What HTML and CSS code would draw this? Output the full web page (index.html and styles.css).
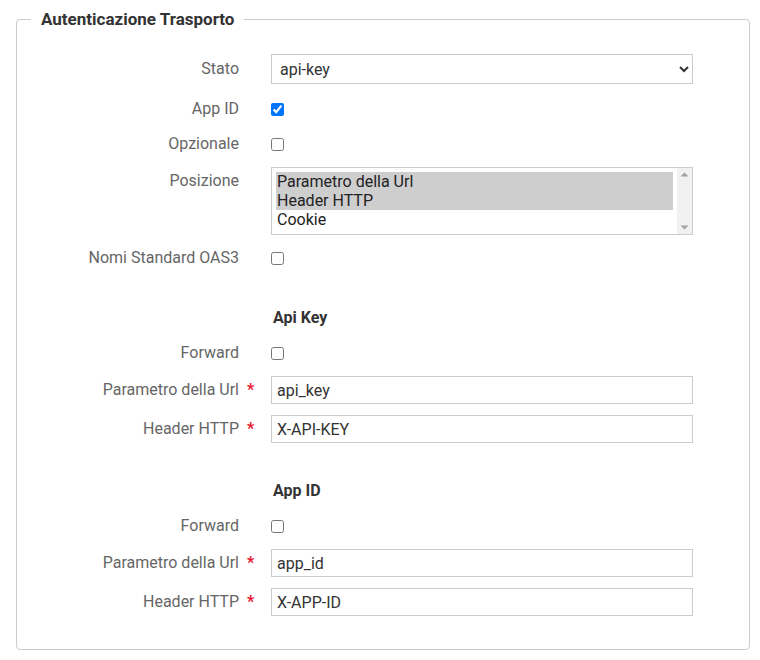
FILE: index.html
```html
<!DOCTYPE html>
<html lang="it">
<head>
<meta charset="utf-8">
<title>Autenticazione Trasporto</title>
<link rel="stylesheet" href="styles.css">
</head>
<body>
<div class="page">
  <fieldset class="box">
    <legend class="box-title">Autenticazione Trasporto</legend>

    <div class="row row-first">
      <label class="lbl">Stato</label>
      <span class="req"></span>
      <select class="ctl-select">
        <option>api-key</option>
      </select>
    </div>

    <div class="row">
      <label class="lbl">App ID</label>
      <span class="req"></span>
      <div class="ctl"><input type="checkbox" class="chk" checked></div>
    </div>

    <div class="row">
      <label class="lbl">Opzionale</label>
      <span class="req"></span>
      <div class="ctl"><input type="checkbox" class="chk"></div>
    </div>

    <div class="row row-top">
      <label class="lbl lbl-top">Posizione</label>
      <span class="req"></span>
      <div class="listbox">
        <div class="list-opts">
          <div class="opt opt-sel">Parametro della Url</div>
          <div class="opt opt-sel">Header HTTP</div>
          <div class="opt">Cookie</div>
        </div>
        <div class="list-scroll">
          <svg width="15" height="12" viewBox="0 0 15 12"><path d="M3.5 8.5 L7.5 4.5 L11.5 8.5 Z" fill="#a3a3a3"/></svg>
          <svg width="15" height="12" viewBox="0 0 15 12"><path d="M3.5 3.5 L7.5 7.5 L11.5 3.5 Z" fill="#a3a3a3"/></svg>
        </div>
      </div>
    </div>

    <div class="row">
      <label class="lbl">Nomi Standard OAS3</label>
      <span class="req"></span>
      <div class="ctl"><input type="checkbox" class="chk"></div>
    </div>

    <div class="row row-heading">
      <span class="lbl"></span>
      <span class="req"></span>
      <div class="sub-title">Api Key</div>
    </div>

    <div class="row">
      <label class="lbl">Forward</label>
      <span class="req"></span>
      <div class="ctl"><input type="checkbox" class="chk"></div>
    </div>

    <div class="row">
      <label class="lbl">Parametro della Url</label>
      <span class="req">*</span>
      <input type="text" class="ctl-input" value="api_key">
    </div>

    <div class="row">
      <label class="lbl">Header HTTP</label>
      <span class="req">*</span>
      <input type="text" class="ctl-input" value="X-API-KEY">
    </div>

    <div class="row row-heading">
      <span class="lbl"></span>
      <span class="req"></span>
      <div class="sub-title">App ID</div>
    </div>

    <div class="row">
      <label class="lbl">Forward</label>
      <span class="req"></span>
      <div class="ctl"><input type="checkbox" class="chk"></div>
    </div>

    <div class="row">
      <label class="lbl">Parametro della Url</label>
      <span class="req">*</span>
      <input type="text" class="ctl-input" value="app_id">
    </div>

    <div class="row row-last">
      <label class="lbl">Header HTTP</label>
      <span class="req">*</span>
      <input type="text" class="ctl-input" value="X-APP-ID">
    </div>
  </fieldset>
</div>
</body>
</html>
```

FILE: styles.css
```css
* { box-sizing: border-box; }

html, body {
  margin: 0;
  padding: 0;
  background: #ffffff;
}

body {
  font-family: Roboto, "Liberation Sans", sans-serif;
  font-size: 16px;
  color: #333333;
}

.page {
  padding: 7px 10px 0 16px;
}

.box {
  margin: 0;
  width: 734px;
  border: 1px solid #cccccc;
  border-radius: 4px;
  padding: 23px 0 33px 0;
}

.box-title {
  margin-left: 14px;
  padding: 0 10px;
  font-weight: 700;
  font-size: 17px;
  line-height: 24px;
  color: #333333;
}

.row {
  display: grid;
  grid-template-columns: 222px 32px 422px;
  align-items: center;
  min-height: 24px;
  margin-bottom: 11px;
}

.row-first { margin-bottom: 13px; }
.row-last { margin-bottom: 0; }
.row-top { align-items: start; }
.row-heading { margin-top: 36px; }

.lbl {
  text-align: right;
  color: #666666;
  line-height: 24px;
}

.lbl-top { padding-top: 2px; }

.req {
  color: #e8132c;
  font-weight: 700;
  text-align: left;
  line-height: 24px;
  padding-left: 8px;
}

.ctl {
  display: flex;
  align-items: center;
  height: 24px;
}

.chk {
  margin: 0;
  width: 13px;
  height: 13px;
}

.ctl-select {
  height: 30px;
  width: 422px;
  border: 1px solid #cccccc;
  border-radius: 0;
  background: #ffffff;
  font-family: Roboto, "Liberation Sans", sans-serif;
  font-size: 16px;
  color: #333333;
  padding: 0 4px;
}

.ctl-input {
  height: 28px;
  width: 422px;
  border: 1px solid #cccccc;
  border-radius: 0;
  padding: 0 5px;
  font-family: Roboto, "Liberation Sans", sans-serif;
  font-size: 16px;
  color: #333333;
  background: #ffffff;
  margin: 0;
}

.listbox {
  display: flex;
  height: 68px;
  border: 1px solid #cccccc;
  background: #ffffff;
  padding: 4px 0 4px 4px;
}

.list-opts {
  flex: 1;
  display: flex;
  flex-direction: column;
}

.opt {
  height: 19px;
  line-height: 19px;
  padding-left: 1px;
  color: #222222;
}

.opt-sel { background: #cecece; }

.list-scroll {
  width: 15px;
  margin: -4px 0 -4px 4px;
  background: #f1f1f1;
  display: flex;
  flex-direction: column;
  justify-content: space-between;
}

.list-scroll svg { display: block; }

.sub-title {
  font-weight: 700;
  color: #333333;
  line-height: 24px;
  padding-left: 2px;
}
```
